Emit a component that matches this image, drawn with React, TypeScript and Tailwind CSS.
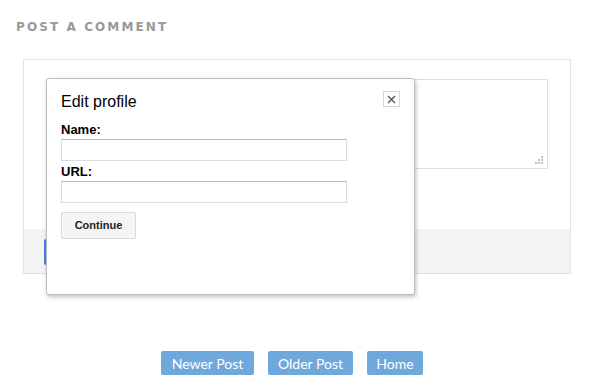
import React from "react";

const navButtons = [
  { label: "Newer Post", width: "w-[93px]" },
  { label: "Older Post", width: "w-[85px]" },
  { label: "Home", width: "w-[56px]" },
];

function ResizeGrip() {
  return (
    <svg width="10" height="10" viewBox="0 0 10 10" className="absolute bottom-[3px] right-[3px]">
      {[
        [8, 2],
        [5, 5],
        [8, 5],
        [2, 8],
        [5, 8],
        [8, 8],
      ].map(([x, y], i) => (
        <rect key={i} x={x - 1} y={y - 1} width="2" height="2" fill="#c4c4c4" />
      ))}
    </svg>
  );
}

function EditProfileDialog() {
  return (
    <div className="absolute left-[46px] top-[78px] w-[369px] h-[217px] bg-white border border-[#bdbdbd] rounded-[3px] shadow-[1px_2px_4px_rgba(0,0,0,0.25)] pl-[14px] pr-[14px] font-['Liberation_Sans',Arial,sans-serif] text-black">
      <button className="absolute right-[14px] top-[12px] w-[17px] h-[16px] border border-[#d6d6d6] bg-white flex items-center justify-center">
        <svg width="9" height="9" viewBox="0 0 9 9">
          <path d="M1 1L8 8M8 1L1 8" stroke="#555" strokeWidth="1.4" />
        </svg>
      </button>
      <h3 className="mt-[13px] text-[16px] leading-[20px]">Edit profile</h3>
      <label className="block mt-[10px] text-[13px] leading-[15px] font-bold">Name:</label>
      <input className="block mt-[2px] w-[286px] h-[22px] border border-[#d9dde3] border-t-[#b9b9b9] outline-none" />
      <label className="block mt-[3px] text-[13px] leading-[15px] font-bold">URL:</label>
      <input className="block mt-[2px] w-[286px] h-[22px] border border-[#d9dde3] border-t-[#b9b9b9] outline-none" />
      <button className="block mt-[9px] w-[75px] h-[27px] bg-[#f5f5f5] border border-[#d9d9d9] rounded-[2px] text-[11px] font-bold text-[#222]">
        Continue
      </button>
    </div>
  );
}

export default function App() {
  return (
    <div className="relative w-[589px] h-[390px] bg-white overflow-hidden">
      <h2 className="pt-[21px] pl-[16px] text-[12px] leading-[12px] font-bold tracking-[2.1px] text-[#999] font-['DejaVu_Sans',sans-serif]">
        POST A COMMENT
      </h2>

      <div className="mt-[26px] ml-[23px] w-[548px] h-[215px] border border-[#e3e3e3] flex flex-col">
        <div className="flex-1 pt-[19px] pl-[20px]">
          <div className="relative ml-[6px] w-[498px] h-[90px] border border-[#dedede]">
            <ResizeGrip />
          </div>
          <div className="mt-[24px] ml-[2px] w-[6px] h-[6px] rounded-full bg-[#e8902b]" />
        </div>
        <div className="h-[44px] bg-[#f3f3f3] pt-[10px] pl-[20px]">
          <div className="w-[60px] h-[26px] rounded-[2px] bg-[#4285f4]" />
        </div>
      </div>

      <div className="mt-[77px] pl-[161px] flex gap-[14px] font-['Lato',sans-serif]">
        {navButtons.map(({ label, width }) => (
          <a
            key={label}
            className={`${width} h-[24px] flex items-center justify-center rounded-[2px] bg-[#6fa8dc] text-white text-[14px]`}
          >
            {label}
          </a>
        ))}
      </div>

      <EditProfileDialog />
    </div>
  );
}
